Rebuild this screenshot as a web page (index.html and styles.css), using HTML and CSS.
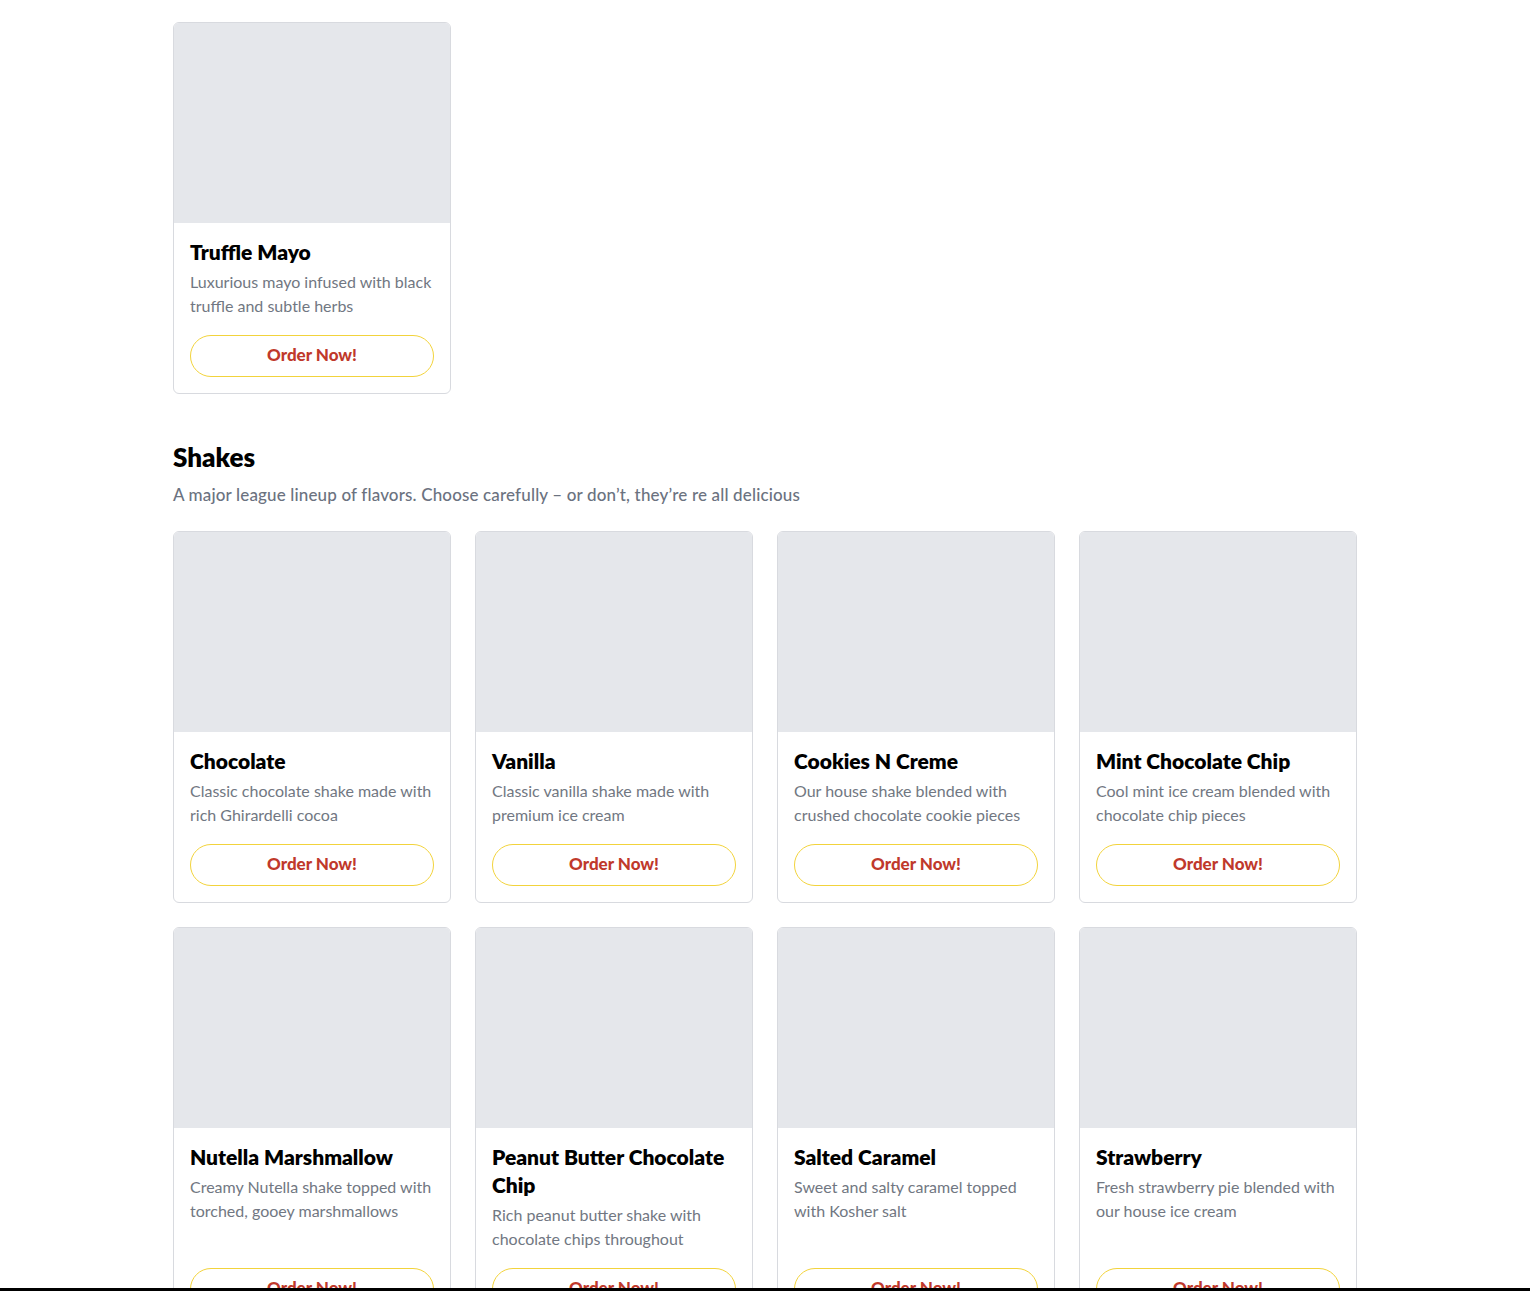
FILE: index.html
```html
<!DOCTYPE html>
<html>
<head>
    <title>Menu</title>
    <link rel="stylesheet" href="styles.css">
</head>
<body>
    <div class="menu">
        <section class="menu-section">
            <div class="card-grid">
                <div class="card">
                    <div class="card-image"></div>
                    <div class="card-body">
                        <h3 class="card-title">Truffle Mayo</h3>
                        <p class="card-text">Luxurious mayo infused with black truffle and subtle herbs</p>
                        <button class="order-btn">Order Now!</button>
                    </div>
                </div>
            </div>
        </section>

        <section class="menu-section">
            <h2 class="section-title">Shakes</h2>
            <p class="section-subtitle">A major league lineup of flavors. Choose carefully – or don’t, they’re re all delicious</p>
            <div class="card-grid">
                <div class="card">
                    <div class="card-image"></div>
                    <div class="card-body">
                        <h3 class="card-title">Chocolate</h3>
                        <p class="card-text">Classic chocolate shake made with rich Ghirardelli cocoa</p>
                        <button class="order-btn">Order Now!</button>
                    </div>
                </div>
                <div class="card">
                    <div class="card-image"></div>
                    <div class="card-body">
                        <h3 class="card-title">Vanilla</h3>
                        <p class="card-text">Classic vanilla shake made with premium ice cream</p>
                        <button class="order-btn">Order Now!</button>
                    </div>
                </div>
                <div class="card">
                    <div class="card-image"></div>
                    <div class="card-body">
                        <h3 class="card-title">Cookies N Creme</h3>
                        <p class="card-text">Our house shake blended with crushed chocolate cookie pieces</p>
                        <button class="order-btn">Order Now!</button>
                    </div>
                </div>
                <div class="card">
                    <div class="card-image"></div>
                    <div class="card-body">
                        <h3 class="card-title">Mint Chocolate Chip</h3>
                        <p class="card-text">Cool mint ice cream blended with chocolate chip pieces</p>
                        <button class="order-btn">Order Now!</button>
                    </div>
                </div>
                <div class="card">
                    <div class="card-image"></div>
                    <div class="card-body">
                        <h3 class="card-title">Nutella Marshmallow</h3>
                        <p class="card-text">Creamy Nutella shake topped with torched, gooey marshmallows</p>
                        <button class="order-btn">Order Now!</button>
                    </div>
                </div>
                <div class="card">
                    <div class="card-image"></div>
                    <div class="card-body">
                        <h3 class="card-title">Peanut Butter Chocolate Chip</h3>
                        <p class="card-text">Rich peanut butter shake with chocolate chips throughout</p>
                        <button class="order-btn">Order Now!</button>
                    </div>
                </div>
                <div class="card">
                    <div class="card-image"></div>
                    <div class="card-body">
                        <h3 class="card-title">Salted Caramel</h3>
                        <p class="card-text">Sweet and salty caramel topped with Kosher salt</p>
                        <button class="order-btn">Order Now!</button>
                    </div>
                </div>
                <div class="card">
                    <div class="card-image"></div>
                    <div class="card-body">
                        <h3 class="card-title">Strawberry</h3>
                        <p class="card-text">Fresh strawberry pie blended with our house ice cream</p>
                        <button class="order-btn">Order Now!</button>
                    </div>
                </div>
            </div>
        </section>
    </div>
    <div class="bottom-bar"></div>
</body>
</html>
```

FILE: styles.css
```css
body {
    font-family: 'Lato', 'Open Sans', sans-serif;
    background-color: #ffffff;
    color: #000000;
    margin: 0;
    padding: 0;
}

.menu {
    max-width: 1184px;
    margin: 0 auto;
    padding-top: 22px;
}

.menu-section {
    margin-bottom: 48px;
}

.section-title {
    font-size: 26px;
    font-weight: 800;
    line-height: 30px;
    margin: 0 0 10px 0;
}

.section-subtitle {
    font-size: 17px;
    font-weight: 500;
    letter-spacing: 0.15px;
    color: #6b7280;
    line-height: 26px;
    margin: 0 0 23px 0;
}

.card-grid {
    display: grid;
    grid-template-columns: repeat(4, 1fr);
    gap: 24px;
}

.card {
    display: flex;
    flex-direction: column;
    border: 1px solid #d8dadf;
    border-radius: 6px;
    overflow: hidden;
    background-color: #ffffff;
}

.card-image {
    height: 200px;
    background-color: #e5e7eb;
}

.card-body {
    flex: 1;
    display: flex;
    flex-direction: column;
    padding: 15px 16px 16px 16px;
}

.card-title {
    font-size: 21px;
    font-weight: 800;
    line-height: 28px;
    margin: 0 0 4px 0;
}

.card-text {
    font-size: 16px;
    font-weight: 400;
    color: #717782;
    line-height: 24px;
    margin: 0 0 17px 0;
}

.order-btn {
    margin-top: auto;
    height: 42px;
    width: 100%;
    padding: 0 0 3px 0;
    font-family: inherit;
    font-size: 17px;
    font-weight: 900;
    color: #c0392b;
    background-color: #ffffff;
    border: 1px solid #f2d33c;
    border-radius: 999px;
    cursor: pointer;
}

.bottom-bar {
    position: fixed;
    left: 0;
    right: 0;
    bottom: 0;
    height: 3px;
    background-color: #000000;
}
```
